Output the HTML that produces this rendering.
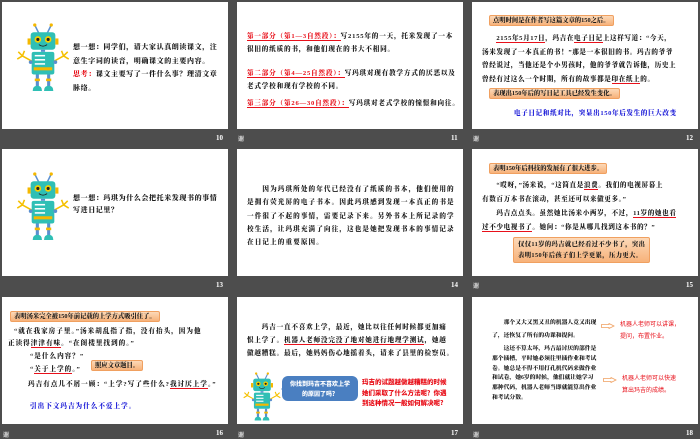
<!DOCTYPE html>
<html><head><meta charset="utf-8"><style>
*{margin:0;padding:0;box-sizing:border-box}
body{width:700px;height:438px;background:#4d4d4d;position:relative;overflow:hidden;font-family:"Liberation Serif","Noto Serif CJK SC",serif;font-weight:900;color:#1a1a1a}
.s{position:absolute;background:#fff;width:226px;height:127px;overflow:hidden}
.t{position:absolute;white-space:nowrap;font-size:6.6px;line-height:8px}
.n{position:absolute;color:#fff;font-size:7px;font-weight:bold;font-family:"Liberation Serif",serif}
.x{position:absolute;color:#ccc;font-size:6px;font-family:"Noto Sans CJK SC",sans-serif}
.ob{position:absolute;background:linear-gradient(#fcd9b8,#f7b27a);border:1px solid #f0a060;border-radius:2px;font-size:6.3px;line-height:9px;padding:0 3px;white-space:nowrap}
.r{color:#e8101a}.b{color:#1b1bd8}
.u{border-bottom:1px solid #e8101a}
</style></head><body>
<svg width="0" height="0" style="position:absolute"><defs>
<g id="rb">
<line x1="26" y1="10" x2="22" y2="2" stroke="#5a8fd0" stroke-width="1.5"/><line x1="34" y1="10" x2="38" y2="2" stroke="#5a8fd0" stroke-width="1.5"/>
<circle cx="22" cy="2" r="1.6" fill="#f5b800"/><circle cx="38" cy="2" r="1.6" fill="#f5b800"/>
<rect x="18" y="9" width="24" height="17" rx="3" fill="#2fbfb5"/>
<rect x="15" y="15" width="3" height="6" fill="#f5b800"/><rect x="42" y="15" width="3" height="6" fill="#f5b800"/>
<circle cx="25" cy="16" r="3.2" fill="#f5d000"/><circle cx="35" cy="16" r="3.2" fill="#f5d000"/>
<circle cx="25" cy="16" r="1.5" fill="#222"/><circle cx="35" cy="16" r="1.5" fill="#222"/>
<path d="M26 21 Q30 24 34 21" stroke="#222" fill="none" stroke-width="0.8"/>
<rect x="28" y="26" width="4" height="2" fill="#5a8fd0"/>
<rect x="19" y="28" width="22" height="22" rx="2" fill="#2fbfb5"/>
<rect x="22" y="31" width="10" height="1.5" fill="#fff"/><rect x="22" y="35" width="10" height="1.5" fill="#fff"/><rect x="22" y="39" width="10" height="1.5" fill="#fff"/>
<rect x="21" y="43" width="18" height="3" fill="#f5b800"/>
<path d="M19 37 L10 32 M10 32 L6 28 M10 32 L5 35 M10 32 L12 27" stroke="#f5c000" stroke-width="1.5" fill="none"/>
<path d="M41 37 L50 32 M50 32 L54 28 M50 32 L55 35 M50 32 L48 27" stroke="#f5c000" stroke-width="1.5" fill="none"/>
<circle cx="18" cy="38" r="1.8" fill="#5a8fd0"/><circle cx="42" cy="38" r="1.8" fill="#5a8fd0"/>
<rect x="23" y="50" width="3" height="12" fill="#5a8fd0"/><rect x="34" y="50" width="3" height="12" fill="#5a8fd0"/>
<rect x="22" y="54" width="5" height="2.5" fill="#f5b800"/><rect x="33" y="54" width="5" height="2.5" fill="#f5b800"/>
<path d="M20 66 Q20 61 24.5 61 Q29 61 29 66Z M31 66 Q31 61 35.5 61 Q40 61 40 66Z" fill="#2fbfb5"/>
</g></defs></svg>

<!-- Slide 10 -->
<div class="s" style="left:2px;top:2px">
<svg style="position:absolute;left:10px;top:21px" width="62" height="70" viewBox="0 0 60 68"><use href="#rb"/></svg>
<div class="t" style="left:71px;top:39px;line-height:13.5px;font-size:7px;letter-spacing:0.6px">想一想：同学们，请大家认真朗读课文，注<br>意生字词的读音，明确课文的主要内容。<br><span class="r">思考：</span>课文主要写了一件什么事？理清文章<br>脉络。</div>
</div>
<div class="n" style="left:216px;top:134px">10</div>

<!-- Slide 11 -->
<div class="s" style="left:237px;top:2px">
<div class="t" style="left:10px;top:28px;line-height:13px;letter-spacing:0.8px"><span class="r u">第一部分（第1—3自然段）：</span>写2155年的一天，托米发现了一本<br>很旧的纸质的书，和他们现在的书大不相同。</div>
<div class="t" style="left:10px;top:65px;line-height:13px;letter-spacing:0.8px"><span class="r u">第二部分（第4—25自然段）：</span>写玛琪对现有教学方式的厌恶以及<br>老式学校和现有学校的不同。</div>
<div class="t" style="left:10px;top:98px;letter-spacing:0.8px"><span class="r u">第三部分（第26—30自然段）：</span>写玛琪对老式学校的憧憬和向往。</div>
</div>
<div class="x" style="left:238px;top:134px">谢</div>
<div class="n" style="left:451px;top:134px">11</div>

<!-- Slide 12 -->
<div class="s" style="left:472px;top:2px">
<div class="ob" style="left:17px;top:13px">点明时间是在作者写这篇文章的150之后。</div>
<div class="t" style="left:10px;top:30px;line-height:13.7px;letter-spacing:0.6px">　　<span class="u">2155年5月17日</span>，玛吉在<span class="u">电子日记</span>上这样写道：“今天，<br>汤米发现了一本真正的书！”那是一本很旧的书。玛吉的爷爷<br>曾经说过，当他还是个小男孩时，他的爷爷就告诉他，历史上<br>曾经有过这么一个时期，所有的故事都是<span class="u">印在纸上</span>的。</div>
<div class="ob" style="left:17px;top:86px">表现出150年后的写日记工具已经发生变化。</div>
<div class="t b" style="left:42px;top:108px;letter-spacing:0.6px">电子日记和纸对比，突显出150年后发生的巨大改变</div>
</div>
<div class="x" style="left:473px;top:134px">谢</div>
<div class="n" style="left:686px;top:134px">12</div>

<!-- Slide 13 -->
<div class="s" style="left:2px;top:149px">
<svg style="position:absolute;left:10px;top:23px" width="62" height="70" viewBox="0 0 60 68"><use href="#rb"/></svg>
<div class="t" style="left:71px;top:44px;line-height:11.5px;font-size:7px;letter-spacing:0.6px">想一想：玛琪为什么会把托米发现书的事情<br>写进日记里？</div>
</div>
<div class="n" style="left:216px;top:281px">13</div>

<!-- Slide 14 -->
<div class="s" style="left:237px;top:149px">
<div class="t" style="left:10px;top:34px;line-height:13.3px;letter-spacing:1.1px">　　因为玛琪所处的年代已经没有了纸质的书本，他们使用的<br>是拥有荧光屏的电子书本。因此玛琪感到发现一本真正的书是<br>一件很了不起的事情，需要记录下来。另外书本上所记录的学<br>校生活，让玛琪充满了向往，这也是她把发现书本的事情记录<br>在日记上的重要原因。</div>
</div>
<div class="n" style="left:451px;top:281px">14</div>

<!-- Slide 15 -->
<div class="s" style="left:472px;top:149px">
<div class="ob" style="left:17px;top:14px">表明150年后科技的发展有了很大进步。</div>
<div class="t" style="left:10px;top:30px;line-height:14px;letter-spacing:0.6px">　　“哎呀，”汤米说，“这简直是<span class="u">浪费</span>。我们的电视屏幕上<br>有数百万本书在滚动，甚至还可以来做更多。”<br>　　玛吉点点头。虽然她比汤米小两岁，不过，<span class="u">11岁的她也看</span><br><span class="u">过不少电视书了</span>。她问：“你是从哪儿找到这本书的？”</div>
<div class="ob" style="left:41px;top:88px;line-height:11px;padding:1px 4px;letter-spacing:0.4px">仅仅11岁的玛吉就已经看过不少书了，突出<br>表明150年后孩子们上学更累，压力更大。</div>
</div>
<div class="x" style="left:473px;top:281px">谢</div>
<div class="n" style="left:686px;top:281px">15</div>

<!-- Slide 16 -->
<div class="s" style="left:2px;top:297px">
<div class="ob" style="left:8px;top:14px">表明汤米完全被150年前记载的上学方式吸引住了。</div>
<div class="t" style="left:12px;top:31px;letter-spacing:1px">“就在我家房子里。”汤米胡乱指了指，没有抬头，因为他</div>
<div class="t" style="left:6px;top:43px;letter-spacing:1px">正读得<span class="u">津津有味</span>。“在阁楼里找到的。”</div>
<div class="t" style="left:28px;top:56px;letter-spacing:1px">“是什么内容？”</div>
<div class="t" style="left:28px;top:69px;letter-spacing:1px">“<span class="u">关于上学的</span>。”</div>
<div class="ob" style="left:89px;top:63px">照应文章题目。</div>
<div class="t" style="left:26px;top:84px;letter-spacing:1px">玛吉有点儿不屑一顾：“上学?写了些什么?<span class="u">我讨厌上学</span>。”</div>
<div class="t b" style="left:28px;top:106px;letter-spacing:1px">引出下文玛吉为什么不爱上学。</div>
</div>
<div class="x" style="left:3px;top:430px">谢</div>
<div class="n" style="left:216px;top:429px">16</div>

<!-- Slide 17 -->
<div class="s" style="left:237px;top:297px">
<div class="t" style="left:10px;top:24px;line-height:13px;letter-spacing:0.8px">　　玛吉一直不喜欢上学，最近，她比以往任何时候都更加痛<br>恨上学了。<span class="u">机器人老师没完没了地对她进行地理学测试</span>，她越<br>做越糟糕。最后，她妈妈伤心地摇着头，请来了县里的检察员。</div>
<svg style="position:absolute;left:3px;top:75px" width="44" height="50" viewBox="0 0 60 68"><use href="#rb"/></svg>
<div style="position:absolute;left:45px;top:79px;width:76px;height:25px;background:#4a7fc1;border-radius:6px;color:#fff;font-family:'Noto Sans CJK SC',sans-serif;font-size:6px;line-height:10px;text-align:center;padding-top:3px">你找到玛吉不喜欢上学<br>的原因了吗？</div>
<div style="position:absolute;left:40px;top:88px;border:4px solid transparent;border-right:6px solid #4a7fc1"></div>
<div class="t r" style="left:125px;top:79px;line-height:10.5px;font-family:'Noto Sans CJK SC',sans-serif;font-size:6.5px">玛吉的试题越做越糟糕的时候<br>她们采取了什么方法呢？你遇<br>到这种情况一般如何解决呢?</div>
</div>
<div class="x" style="left:238px;top:430px">谢</div>
<div class="n" style="left:451px;top:429px">17</div>

<!-- Slide 18 -->
<div class="s" style="left:472px;top:297px">
<div class="t" style="left:20px;top:20px;line-height:12.5px;font-size:5.8px">　　那个又大又黑又丑的机器人竟又出现<br>了，还恢复了所有的功课和提问。</div>
<div class="t" style="left:20px;top:48px;line-height:9.8px;font-size:5.8px">　　这还不算太坏，玛吉最讨厌的部件是<br>那个插槽，平时她必须往里插作业和考试<br>卷。她总是不得不用打孔机代码来做作业<br>和试卷，她6岁的时候，他们就让她学习<br>那种代码，机器人老师当即就能算出作业<br>和考试分数。</div>
<svg style="position:absolute;left:129px;top:26px" width="14" height="6"><path d="M0.5 1.5H8V0.5L13 3L8 5.5V4.5H0.5Z" fill="none" stroke="#f0a060" stroke-width="0.8"/></svg>
<svg style="position:absolute;left:131px;top:80px" width="14" height="6"><path d="M0.5 1.5H8V0.5L13 3L8 5.5V4.5H0.5Z" fill="none" stroke="#f0a060" stroke-width="0.8"/></svg>
<div class="t r" style="left:148px;top:21px;line-height:12px;font-family:'Noto Sans CJK SC',sans-serif;font-weight:normal;font-size:6px">机器人老师可以讲课，<br>提问，布置作业。</div>
<div class="t r" style="left:150px;top:75px;line-height:12px;font-family:'Noto Sans CJK SC',sans-serif;font-weight:normal;font-size:6px">机器人老师可以快速<br>算出玛吉的成绩。</div>
</div>
<div class="x" style="left:473px;top:430px">谢</div>
<div class="n" style="left:686px;top:429px">18</div>
</body></html>
